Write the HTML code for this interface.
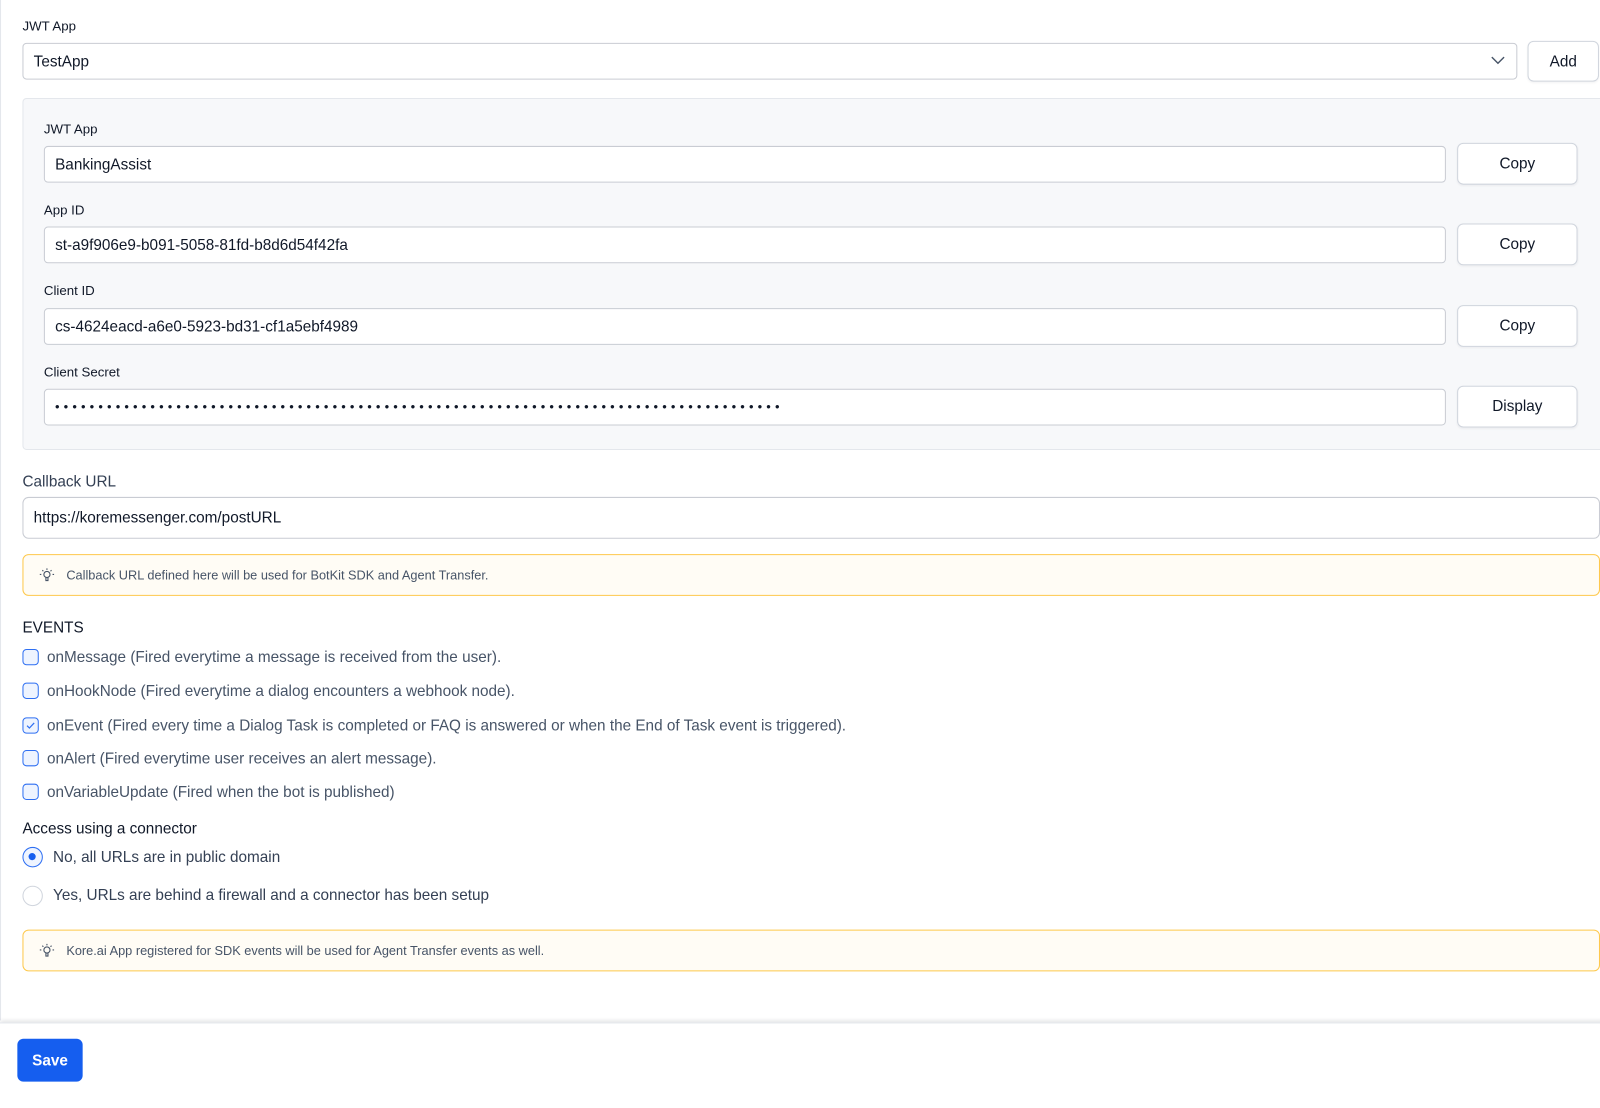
<!DOCTYPE html>
<html><head><meta charset="utf-8"><style>
*{box-sizing:border-box;margin:0;padding:0}
html,body{width:1600px;height:1086px;overflow:hidden;background:#fff}
#w{position:absolute;left:0;top:0;width:1568px;height:1065px;transform:scale(1.0204);transform-origin:0 0;font-family:"Liberation Sans",Arial,sans-serif;color:#101828}
.a{position:absolute}
.lbl{font-size:13px;color:#101828}
.inp{position:absolute;background:#fff;border:1px solid #c9ccd3;border-radius:4px;font-size:15px;padding-left:10px;display:flex;align-items:center;color:#101828}
.btn{position:absolute;background:#fff;border:1px solid #d0d5dd;border-radius:6px;font-size:15px;display:flex;align-items:center;justify-content:center;color:#101828;box-shadow:0 1px 2px rgba(16,24,40,.05)}
.info{position:absolute;left:22px;width:1546px;height:41px;background:#fffcf5;border:1px solid #fec84b;border-radius:6px;font-size:12.5px;color:#475467;display:flex;align-items:center;padding-left:42px}
.info svg{position:absolute;left:15px;top:12px}
.cb{position:absolute;left:22px;width:16px;height:16px;border:1.3px solid #2e6ff2;border-radius:4px;background:#eef4ff}
.ev{position:absolute;left:46px;font-size:15px;color:#475467}
</style></head><body><div id="w">
<div class="a" style="left:0;top:0;width:1px;height:1000px;background:#e4e7ec"></div>
<div class="a lbl" style="left:22px;top:18px">JWT App</div>
<div class="inp" style="left:22px;top:42px;width:1465px;height:36px">TestApp</div>
<svg class="a" style="left:1460px;top:53px" width="16" height="12" viewBox="0 0 16 12"><path d="M2 3l6 6 6-6" fill="none" stroke="#475467" stroke-width="1.4"/></svg>
<div class="btn" style="left:1497px;top:40px;width:70px;height:40px">Add</div>
<div class="a" style="left:22px;top:96px;width:1560px;height:345px;background:#f7f8fa;border:1px solid #e4e7ec;border-radius:4px"></div>
<div class="a lbl" style="left:43px;top:119px">JWT App</div>
<div class="inp" style="left:43px;top:143px;width:1374px;height:36px">BankingAssist</div>
<div class="btn" style="left:1428px;top:140px;width:118px;height:41px">Copy</div>
<div class="a lbl" style="left:43px;top:198px">App ID</div>
<div class="inp" style="left:43px;top:222px;width:1374px;height:36px">st-a9f906e9-b091-5058-81fd-b8d6d54f42fa</div>
<div class="btn" style="left:1428px;top:219px;width:118px;height:41px">Copy</div>
<div class="a lbl" style="left:43px;top:277px">Client ID</div>
<div class="inp" style="left:43px;top:302px;width:1374px;height:36px">cs-4624eacd-a6e0-5923-bd31-cf1a5ebf4989</div>
<div class="btn" style="left:1428px;top:299px;width:118px;height:41px">Copy</div>
<div class="a lbl" style="left:43px;top:357px">Client Secret</div>
<div class="inp" style="left:43px;top:381px;width:1374px;height:36px;font-size:12px;letter-spacing:4.3px;font-weight:bold;overflow:hidden;white-space:nowrap">••••••••••••••••••••••••••••••••••••••••••••••••••••••••••••••••••••••••••••••••••••</div>
<div class="btn" style="left:1428px;top:378px;width:118px;height:41px">Display</div>
<div class="a" style="left:22px;top:464px;font-size:15px;color:#344054">Callback URL</div>
<div class="inp" style="left:22px;top:487px;width:1546px;height:41px;border-radius:6px">https://koremessenger.com/postURL</div>
<div class="info" style="top:543px"><svg width="16" height="16" viewBox="0 0 16 16" fill="none" stroke="#475467" stroke-width="1.1"><circle cx="8" cy="7" r="3"/><path d="M7 10v3h2v-3M8 1v1.5M2.5 7H1M15 7h-1.5M3.5 2.8l1 1M12.5 2.8l-1 1"/></svg>Callback URL defined here will be used for BotKit SDK and Agent Transfer.</div>
<div class="a" style="left:22px;top:607px;font-size:15px;color:#101828">EVENTS</div>
<div class="cb" style="top:636px"></div><div class="ev" style="top:636px">onMessage (Fired everytime a message is received from the user).</div>
<div class="cb" style="top:669px"></div><div class="ev" style="top:669px">onHookNode (Fired everytime a dialog encounters a webhook node).</div>
<div class="cb" style="top:703px"><svg class="a" style="left:2px;top:2px" width="10" height="10" viewBox="0 0 10 10"><path d="M1.5 5.2l2.3 2.3L8.5 2.5" fill="none" stroke="#2e6ff2" stroke-width="1.2"/></svg></div><div class="ev" style="top:703px">onEvent (Fired every time a Dialog Task is completed or FAQ is answered or when the End of Task event is triggered).</div>
<div class="cb" style="top:735px"></div><div class="ev" style="top:735px">onAlert (Fired everytime user receives an alert message).</div>
<div class="cb" style="top:768px"></div><div class="ev" style="top:768px">onVariableUpdate (Fired when the bot is published)</div>
<div class="a" style="left:22px;top:804px;font-size:15px;color:#101828">Access using a connector</div>
<div class="a" style="left:22px;top:830px;width:20px;height:20px;border:1.5px solid #2e6ff2;border-radius:50%;background:#eef4ff"><div class="a" style="left:5px;top:5px;width:7px;height:7px;border-radius:50%;background:#155eef"></div></div>
<div class="a" style="left:52px;top:832px;font-size:15px;color:#344054">No, all URLs are in public domain</div>
<div class="a" style="left:22px;top:868px;width:20px;height:20px;border:1px solid #d0d5dd;border-radius:50%;background:#fff"></div>
<div class="a" style="left:52px;top:869px;font-size:15px;color:#344054">Yes, URLs are behind a firewall and a connector has been setup</div>
<div class="info" style="top:911px"><svg width="16" height="16" viewBox="0 0 16 16" fill="none" stroke="#475467" stroke-width="1.1"><circle cx="8" cy="7" r="3"/><path d="M7 10v3h2v-3M8 1v1.5M2.5 7H1M15 7h-1.5M3.5 2.8l1 1M12.5 2.8l-1 1"/></svg>Kore.ai App registered for SDK events will be used for Agent Transfer events as well.</div>
<div class="a" style="left:0;top:1002px;width:1600px;height:84px;background:#fff;box-shadow:0 -2px 4px rgba(16,24,40,.12);border-top:1px solid #e4e7ec"></div>
<div class="a" style="left:17px;top:1018px;width:64px;height:42px;background:#155eef;border-radius:6px;color:#fff;font-weight:bold;font-size:15px;display:flex;align-items:center;justify-content:center">Save</div>
</div></body></html>
